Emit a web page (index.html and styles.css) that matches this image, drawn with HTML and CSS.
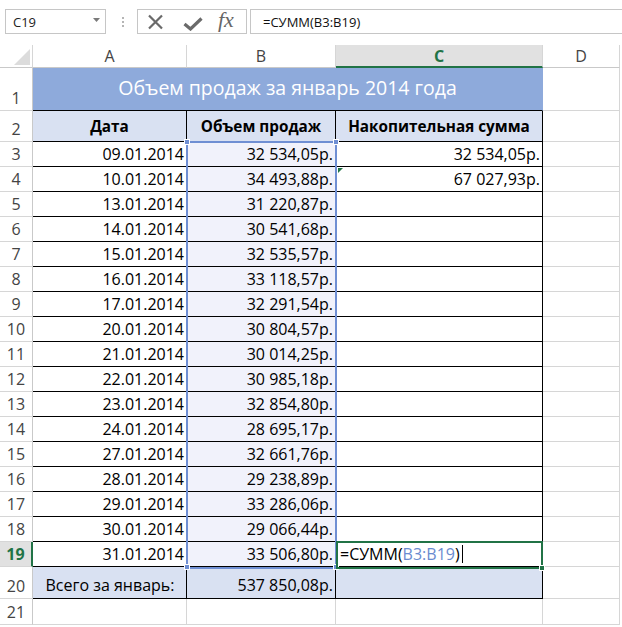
FILE: index.html
```html
<!DOCTYPE html>
<html lang="ru">
<head>
<meta charset="utf-8">
<title>Excel</title>
<link rel="stylesheet" href="styles.css">
</head>
<body>
<div class="app">
  <div class="fbar">
    <div class="namebox"><span class="nb-text">C19</span><svg class="nb-arrow" width="7" height="4" viewBox="0 0 7 4"><polygon points="0,0 7,0 3.5,4" fill="#7a7a7a"/></svg></div>
    <div class="dots"><i></i><i></i><i></i></div>
    <div class="fnbox">
      <svg class="ic-x" width="17" height="16" viewBox="0 0 17 16"><path d="M2 1.5 L15 14.5 M15 1.5 L2 14.5" stroke="#6a6a6a" stroke-width="2.2" fill="none"/></svg>
      <svg class="ic-ok" width="20" height="14" viewBox="0 0 20 14"><path d="M1.5 7 L7.5 12 L18.5 1.5" stroke="#6a6a6a" stroke-width="3.2" fill="none"/></svg>
      <span class="fx">fx</span>
    </div>
    <div class="finput">=СУММ(B3:B19)</div>
  </div>

  <div class="sheet">
    <div class="c corner"><svg width="16" height="16" viewBox="0 0 16 16"><polygon points="16,0 16,16 0,16" fill="#dcdcdc"/></svg></div>
    <div class="c ch">A</div>
    <div class="c ch">B</div>
    <div class="c ch ch-sel">C</div>
    <div class="c ch">D</div>

    <div class="c rh">1</div>
    <div class="c title">Объем продаж за январь 2014 года</div>
    <div class="c"></div>

    <div class="c rh">2</div>
    <div class="c t head">Дата</div>
    <div class="c t head">Объем продаж</div>
    <div class="c t head">Накопительная сумма</div>
    <div class="c"></div>

    <div class="c rh">3</div><div class="c t r">09.01.2014</div><div class="c t r rb">32 534,05р.</div><div class="c t r">32 534,05р.</div><div class="c"></div>
    <div class="c rh">4</div><div class="c t r">10.01.2014</div><div class="c t r rb">34 493,88р.</div><div class="c t r">67 027,93р.</div><div class="c"></div>
    <div class="c rh">5</div><div class="c t r">13.01.2014</div><div class="c t r rb">31 220,87р.</div><div class="c t"></div><div class="c"></div>
    <div class="c rh">6</div><div class="c t r">14.01.2014</div><div class="c t r rb">30 541,68р.</div><div class="c t"></div><div class="c"></div>
    <div class="c rh">7</div><div class="c t r">15.01.2014</div><div class="c t r rb">32 535,57р.</div><div class="c t"></div><div class="c"></div>
    <div class="c rh">8</div><div class="c t r">16.01.2014</div><div class="c t r rb">33 118,57р.</div><div class="c t"></div><div class="c"></div>
    <div class="c rh">9</div><div class="c t r">17.01.2014</div><div class="c t r rb">32 291,54р.</div><div class="c t"></div><div class="c"></div>
    <div class="c rh">10</div><div class="c t r">20.01.2014</div><div class="c t r rb">30 804,57р.</div><div class="c t"></div><div class="c"></div>
    <div class="c rh">11</div><div class="c t r">21.01.2014</div><div class="c t r rb">30 014,25р.</div><div class="c t"></div><div class="c"></div>
    <div class="c rh">12</div><div class="c t r">22.01.2014</div><div class="c t r rb">30 985,18р.</div><div class="c t"></div><div class="c"></div>
    <div class="c rh">13</div><div class="c t r">23.01.2014</div><div class="c t r rb">32 854,80р.</div><div class="c t"></div><div class="c"></div>
    <div class="c rh">14</div><div class="c t r">24.01.2014</div><div class="c t r rb">28 695,17р.</div><div class="c t"></div><div class="c"></div>
    <div class="c rh">15</div><div class="c t r">27.01.2014</div><div class="c t r rb">32 661,76р.</div><div class="c t"></div><div class="c"></div>
    <div class="c rh">16</div><div class="c t r">28.01.2014</div><div class="c t r rb">29 238,89р.</div><div class="c t"></div><div class="c"></div>
    <div class="c rh">17</div><div class="c t r">29.01.2014</div><div class="c t r rb">33 286,06р.</div><div class="c t"></div><div class="c"></div>
    <div class="c rh">18</div><div class="c t r">30.01.2014</div><div class="c t r rb">29 066,44р.</div><div class="c t"></div><div class="c"></div>
    <div class="c rh rh-sel">19</div><div class="c t r">31.01.2014</div><div class="c t r rb">33 506,80р.</div><div class="c t edit">=СУММ(<span class="ref">B3:B19</span>)<span class="caret"></span></div><div class="c"></div>

    <div class="c rh">20</div><div class="c t tot mid">Всего за январь:</div><div class="c t tot r">537 850,08р.</div><div class="c t tot"></div><div class="c"></div>
    <div class="c rh">21</div><div class="c"></div><div class="c"></div><div class="c"></div><div class="c"></div>

    <div class="range"></div>
    <div class="hd hd-tl"></div>
    <div class="hd hd-tr"></div>
    <div class="hd hd-bl"></div>
    <div class="hd hd-br"></div>
    <div class="sel"></div>
    <div class="sel-hd"></div>
    <div class="err"></div>
  </div>
</div>
</body>
</html>
```

FILE: styles.css
```css
* { box-sizing: border-box; }
html, body { margin: 0; padding: 0; background: #fff; }
body { font-family: "Open Sans", "Liberation Sans", sans-serif; color: #000; width: 622px; height: 627px; overflow: hidden; }

.fbar { display: flex; padding: 9px 0 0 5px; height: 34px; }
.namebox { width: 101px; height: 25px; border: 1px solid #c6c6c6; display: flex; align-items: center; justify-content: space-between; padding: 0 5px 0 7px; }
.nb-text { font-size: 13px; color: #222; }
.nb-arrow { margin-top: -3px; }
.dots { margin-left: 14px; width: 5px; height: 25px; display: flex; flex-direction: column; justify-content: center; align-items: center; gap: 2px; }
.dots i { display: block; width: 2px; height: 2px; background: #b5b5b5; }
.fnbox { margin-left: 12px; width: 110px; height: 25px; border: 1px solid #c6c6c6; display: flex; align-items: center; padding-left: 9px; }
.ic-ok { margin-left: 19px; margin-top: 4px; }
.fx { margin-left: 15px; font-family: "Liberation Serif", "DejaVu Serif", serif; font-style: italic; font-size: 22px; color: #666; line-height: 20px; margin-top: -3px; }
.finput { margin-left: 3px; flex: 1; height: 25px; border: 1px solid #c6c6c6; border-right: none; display: flex; align-items: center; padding-left: 12px; font-size: 13px; color: #111; }

.sheet { position: relative; margin-top: 11px; display: grid; grid-template-columns: 33px 154px 149px 207px 77px; grid-template-rows: 23px 43px 31px repeat(17, 25px) 32px 26px; font-size: 16px; }
.c { border-right: 1px solid #d6d6d6; border-bottom: 1px solid #d6d6d6; display: flex; align-items: flex-end; padding: 0 2px 1px 3px; white-space: nowrap; overflow: hidden; line-height: 22px; }
.corner { align-items: flex-end; justify-content: flex-end; padding: 0 2px 2px 0; border-bottom-color: #c9c9c9; }
.ch { align-items: center; justify-content: center; color: #444; padding: 0; border-bottom-color: #c9c9c9; }
.ch-sel { background: #e1e1e1; color: #217346; font-weight: 700; border-bottom: 2px solid #217346; }
.rh { justify-content: center; color: #444; padding: 0 0 1px 0; border-right-color: #c9c9c9; }
.rh-sel { background: #e1e1e1; color: #217346; font-weight: 700; border-right: 2px solid #217346; }

.title { grid-column: span 3; background: #8eaadb; color: #fff; font-size: 19.5px; justify-content: center; align-items: center; border-bottom-color: #000; border-right-color: #8eaadb; padding: 0 0 2px 0; }
.t { border-right-color: #000; border-bottom-color: #000; }
.head { background: #d9e1f2; font-weight: 700; font-size: 15.3px; justify-content: center; align-items: center; padding: 0; }
.r { justify-content: flex-end; }
.rb { background: #f1f2fb; }
.tot { background: #d9e1f2; padding-bottom: 2px; }
.mid { justify-content: center; }
.edit { padding-left: 4px; }
.ref { color: #6a8bd0; }
.caret { display: inline-block; width: 1px; height: 18px; background: #000; margin-left: 2px; margin-bottom: 2px; }

.range { position: absolute; left: 186px; top: 96px; width: 151px; height: 428px; border: 2px solid #6f8fd3; pointer-events: none; }
.hd { position: absolute; width: 6px; height: 6px; background: #6f8fd3; border: 1px solid #fff; }
.hd-tl { left: 184px; top: 94px; }
.hd-tr { left: 333px; top: 94px; }
.hd-bl { left: 184px; top: 519px; }
.hd-br { left: 333px; top: 519px; }
.sel { position: absolute; left: 336px; top: 496px; width: 207px; height: 28px; border: 2px solid #217346; }
.sel-hd { position: absolute; left: 539px; top: 520px; width: 6px; height: 6px; background: #217346; border: 1px solid #fff; }
.err { position: absolute; left: 338px; top: 123px; width: 0; height: 0; border-top: 5px solid #217346; border-right: 5px solid transparent; }
```
